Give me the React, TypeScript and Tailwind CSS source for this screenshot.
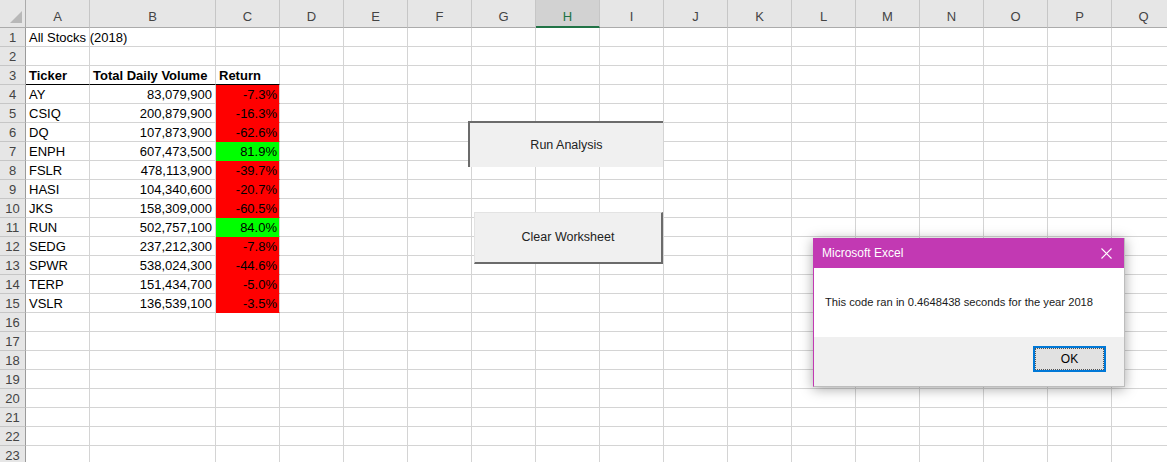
import React from "react";

type Col = { label: string; w: number };

const cols: Col[] = [
  { label: "A", w: 64 },
  { label: "B", w: 126 },
  { label: "C", w: 64 },
  ...["D", "E", "F", "G", "H", "I", "J", "K", "L", "M", "N", "O", "P", "Q"].map((label) => ({ label, w: 64 })),
];

const stocks: [string, string, string, boolean][] = [
  ["AY", "83,079,900", "-7.3%", false],
  ["CSIQ", "200,879,900", "-16.3%", false],
  ["DQ", "107,873,900", "-62.6%", false],
  ["ENPH", "607,473,500", "81.9%", true],
  ["FSLR", "478,113,900", "-39.7%", false],
  ["HASI", "104,340,600", "-20.7%", false],
  ["JKS", "158,309,000", "-60.5%", false],
  ["RUN", "502,757,100", "84.0%", true],
  ["SEDG", "237,212,300", "-7.8%", false],
  ["SPWR", "538,024,300", "-44.6%", false],
  ["TERP", "151,434,700", "-5.0%", false],
  ["VSLR", "136,539,100", "-3.5%", false],
];

const rows = Array.from({ length: 23 }, (_, i) => i + 1);

function cellContent(row: number, col: number) {
  if (row === 1 && col === 0) return { text: "All Stocks (2018)", cls: "" };
  if (row === 3) {
    if (col === 0) return { text: "Ticker", cls: "font-bold" };
    if (col === 1) return { text: "Total Daily Volume", cls: "font-bold" };
    if (col === 2) return { text: "Return", cls: "font-bold" };
  }
  const s = stocks[row - 4];
  if (s && col === 0) return { text: s[0], cls: "" };
  if (s && col === 1) return { text: s[1], cls: "justify-end" };
  return null;
}

function Cell({ row, col, w }: { row: number; col: number; w: number }) {
  const s = stocks[row - 4];
  const underline = row === 3 && col <= 2;
  if (s && col === 2) {
    return (
      <div
        style={{ width: w }}
        className={
          s[3]
            ? "flex h-[19px] shrink-0 items-center justify-end border-b border-r border-b-[#00ff00] border-r-[#d4d4d4] bg-[#00ff00] pr-[2px] pt-[1px]"
            : "flex h-[19px] shrink-0 items-center justify-end border-b border-r border-b-[#ff0000] border-r-[#d4d4d4] bg-[#ff0000] pr-[2px] pt-[1px]"
        }
      >
        {s[2]}
      </div>
    );
  }
  const c = cellContent(row, col);
  return (
    <div
      style={{ width: w }}
      className={
        underline
          ? "flex h-[19px] shrink-0 items-center whitespace-nowrap border-b border-r border-b-black border-r-[#d4d4d4] px-[3px] pt-[1px]"
          : "flex h-[19px] shrink-0 items-center whitespace-nowrap border-b border-r border-[#d4d4d4] px-[3px] pt-[1px]"
      }
    >
      {c && <span className={c.cls === "justify-end" ? "ml-auto" : c.cls}>{c.text}</span>}
    </div>
  );
}

export default function App() {
  return (
    <div className="relative h-[462px] w-[1167px] overflow-hidden bg-white font-['Liberation_Sans',Arial,sans-serif] text-[13px] text-black">
      {/* column headers */}
      <div className="flex h-[28px]">
        <div className="relative h-[28px] w-[26px] shrink-0 border-b border-r border-[#ababab] bg-[#e6e6e6]">
          <svg className="absolute left-0 top-0" width="26" height="28" viewBox="0 0 26 28">
            <polygon points="22,11 22,23 10,23" fill="#b8b8b8" />
          </svg>
        </div>
        {cols.map((c) => (
          <div
            key={c.label}
            style={{ width: c.w }}
            className={
              c.label === "H"
                ? "flex h-[28px] shrink-0 items-center justify-center border-b-2 border-r border-b-[#217346] border-r-[#c6c6c6] bg-[#d2d2d2] pt-[7px] text-[#217346]"
                : "flex h-[28px] shrink-0 items-center justify-center border-b border-r border-b-[#ababab] border-r-[#c6c6c6] bg-[#e6e6e6] pt-[6px] text-[#444]"
            }
          >
            {c.label}
          </div>
        ))}
      </div>

      {rows.map((r) => (
        <div key={r} className="flex h-[19px]">
          <div className="flex h-[19px] w-[26px] shrink-0 items-center justify-center border-b border-r border-b-[#c6c6c6] border-r-[#9b9b9b] bg-[#e6e6e6] pt-[1px] text-[#444]">
            {r}
          </div>
          {cols.map((c, ci) => (
            <Cell key={c.label} row={r} col={ci} w={c.w} />
          ))}
        </div>
      ))}

      {/* sheet buttons */}
      <div className="absolute left-[468px] top-[121px] flex h-[46px] w-[195px] items-center justify-center border-l-2 border-t-2 border-[#6b6b6b] bg-[#f0f0f0] text-[12.5px] text-[#222]">
        Run Analysis
      </div>
      <div className="absolute left-[474px] top-[212px] flex h-[52px] w-[189px] items-center justify-center border-b-2 border-r-2 border-l border-t border-b-[#6b6b6b] border-l-[#e3e3e3] border-r-[#6b6b6b] border-t-[#e3e3e3] bg-[#f0f0f0] text-[12.5px] text-[#222]">
        Clear Worksheet
      </div>

      {/* message box */}
      <div className="absolute left-[813px] top-[238px] flex h-[149px] w-[312px] flex-col border-b border-l border-r border-b-[#bdbdbd] border-l-[#c239b3] border-r-[#bdbdbd] bg-white shadow-[0_2px_12px_rgba(0,0,0,0.35)]">
        <div className="flex h-[30px] shrink-0 items-center justify-between bg-[#c239b3] pl-[8px] pr-[12px] text-[12px] text-white">
          <span>Microsoft Excel</span>
          <svg width="11" height="11" viewBox="0 0 11 11">
            <path d="M0.5 0.5 L10.5 10.5 M10.5 0.5 L0.5 10.5" stroke="white" strokeWidth="1.1" />
          </svg>
        </div>
        <div className="flex h-[69px] shrink-0 items-center pl-[11px] text-[11.2px] text-[#1a1a1a]">
          This code ran in 0.4648438 seconds for the year 2018
        </div>
        <div className="flex flex-1 items-start justify-end bg-[#f0f0f0] pr-[18px] pt-[9px]">
          <div className="flex h-[26px] w-[73px] items-center justify-center border-2 border-[#0078d7] bg-[#e1e1e1] text-[12px] text-black">
            <div className="flex h-full w-full items-center justify-center border border-dotted border-[#555]">OK</div>
          </div>
        </div>
      </div>
    </div>
  );
}
